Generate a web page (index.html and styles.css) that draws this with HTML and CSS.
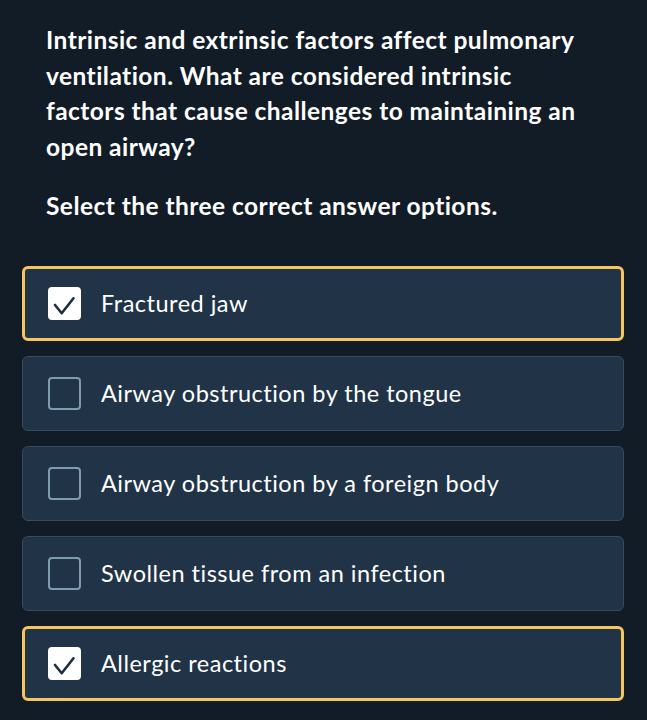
FILE: index.html
```html
<!DOCTYPE html>
<html lang="en">
<head>
<meta charset="utf-8">
<link rel="stylesheet" href="styles.css">
</head>
<body>
<main class="quiz">
  <div class="question">
    <p class="prompt">Intrinsic and extrinsic factors affect pulmonary ventilation. What are considered intrinsic factors that cause challenges to maintaining an open airway?</p>
    <p class="instruction">Select the three correct answer options.</p>
  </div>
  <ul class="options">
    <li class="option selected">
      <span class="box"><svg viewBox="0 0 33 33" width="33" height="33"><path d="M7 18l6.7 8.2L25.5 11.3" fill="none" stroke="#1f2d3d" stroke-width="2.6" stroke-linecap="round" stroke-linejoin="round"/></svg></span>
      <span class="label">Fractured jaw</span>
    </li>
    <li class="option">
      <span class="box"></span>
      <span class="label">Airway obstruction by the tongue</span>
    </li>
    <li class="option">
      <span class="box"></span>
      <span class="label">Airway obstruction by a foreign body</span>
    </li>
    <li class="option">
      <span class="box"></span>
      <span class="label">Swollen tissue from an infection</span>
    </li>
    <li class="option selected">
      <span class="box"><svg viewBox="0 0 33 33" width="33" height="33"><path d="M7 18l6.7 8.2L25.5 11.3" fill="none" stroke="#1f2d3d" stroke-width="2.6" stroke-linecap="round" stroke-linejoin="round"/></svg></span>
      <span class="label">Allergic reactions</span>
    </li>
  </ul>
</main>
</body>
</html>
```
FILE: styles.css
```css
html, body {
  margin: 0;
  padding: 0;
  background: #111c27;
}
body {
  font-family: "Lato", "Noto Sans", sans-serif;
  color: #ffffff;
}
.quiz {
  padding: 22px 22px 0 22px;
}
.question {
  padding: 0 32px 0 24px;
}
.prompt {
  margin: 0;
  font-size: 24.5px;
  line-height: 35.5px;
  font-weight: 700;
  letter-spacing: 0.45px;
}
.instruction {
  margin: 24px 0 0 0;
  font-size: 24.5px;
  line-height: 35.5px;
  font-weight: 700;
  letter-spacing: 0.45px;
}
.options {
  list-style: none;
  margin: 42px 0 0 0;
  padding: 0;
  display: flex;
  flex-direction: column;
  gap: 15px;
}
.option {
  box-sizing: border-box;
  height: 75px;
  width: 602px;
  display: flex;
  align-items: center;
  background: #213447;
  border: 1px solid #364b5f;
  border-radius: 6px;
  padding-left: 25px;
}
.option.selected {
  border: 3px solid #f6c55e;
  padding-left: 23px;
}
.box {
  box-sizing: border-box;
  width: 33px;
  height: 33px;
  border: 2px solid #7d9cb2;
  border-radius: 4px;
  position: relative;
  flex: none;
}
.box svg {
  position: absolute;
  left: -2px;
  top: -2px;
}
.selected .box {
  background: #ffffff;
  border-color: #ffffff;
}
.label {
  margin-left: 20px;
  font-size: 23.5px;
  font-weight: 400;
  letter-spacing: 0.5px;
}
```
